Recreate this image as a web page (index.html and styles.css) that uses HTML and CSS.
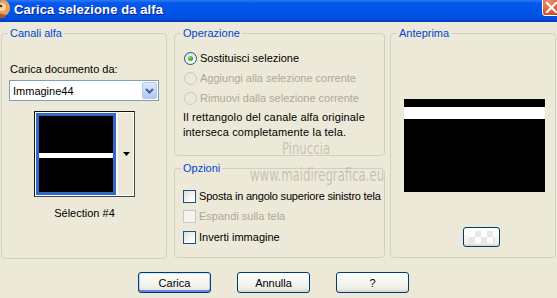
FILE: index.html
```html
<!DOCTYPE html>
<html>
<head>
<meta charset="utf-8">
<link rel="stylesheet" href="styles.css">
</head>
<body>
<div class="window">
  <div class="titlebar">
    <svg class="app-icon" width="14" height="20" viewBox="0 0 14 20">
      <ellipse cx="5" cy="9" rx="7" ry="8" fill="#E9A25A"/>
      <ellipse cx="4" cy="8" rx="4" ry="4" fill="#F6D7A8"/>
      <circle cx="3" cy="7" r="1.3" fill="#5A2C10"/>
      <path d="M0 14 L8 16 L6 19 L0 19 Z" fill="#B5552A"/>
    </svg>
    <span class="title">Carica selezione da alfa</span>
    <div class="close">
      <svg width="13" height="13" viewBox="0 0 13 13"><path d="M2 2 L11 11 M11 2 L2 11" stroke="#fff" stroke-width="2.2" stroke-linecap="square"/></svg>
    </div>
  </div>

  <div class="main">
    <fieldset class="box canali">
      <legend>Canali alfa</legend>
      <div class="lbl">Carica documento da:</div>
      <div class="combo">
        <span class="combo-text">Immagine44</span>
        <span class="combo-btn">
          <svg width="9" height="6" viewBox="0 0 9 6"><path d="M1 1 L4.5 4.5 L8 1" fill="none" stroke="#4D6185" stroke-width="2"/></svg>
        </span>
      </div>
      <div class="thumb-wrap">
        <div class="thumb">
          <div class="thumb-img"><div class="thumb-stripe"></div></div>
          <div class="thumb-drop">
            <svg width="7" height="4" viewBox="0 0 7 4"><path d="M0 0 H7 L3.5 4 Z" fill="#000"/></svg>
          </div>
        </div>
        <div class="thumb-name">Sélection #4</div>
      </div>
    </fieldset>

    <div class="col2">
      <fieldset class="box oper">
        <legend>Operazione</legend>
        <div class="opt"><span class="radio checked"></span><span>Sostituisci selezione</span></div>
        <div class="opt disabled"><span class="radio"></span><span>Aggiungi alla selezione corrente</span></div>
        <div class="opt disabled"><span class="radio"></span><span>Rimuovi dalla selezione corrente</span></div>
        <p class="note">Il rettangolo del canale alfa originale<br>interseca completamente la tela.</p>
      </fieldset>
      <fieldset class="box opz">
        <legend>Opzioni</legend>
        <div class="chk-row"><span class="check"></span><span class="tight">Sposta in angolo superiore sinistro tela</span></div>
        <div class="chk-row disabled"><span class="check"></span><span>Espandi sulla tela</span></div>
        <div class="chk-row last"><span class="check"></span><span>Inverti immagine</span></div>
      </fieldset>
    </div>

    <fieldset class="box antep">
      <legend>Anteprima</legend>
      <div class="preview"><div class="preview-stripe"></div></div>
      <div class="bg-btn"><div class="checker"></div></div>
    </fieldset>
  </div>

  <div class="buttons">
    <button class="btn default">Carica</button>
    <button class="btn">Annulla</button>
    <button class="btn">?</button>
  </div>

  <div class="watermark">
    <div class="wm1">Pinuccia</div>
    <div class="wm2">www.maidiregrafica.eu</div>
  </div>
</div>
</body>
</html>
```

FILE: styles.css
```css
html, body {
  margin: 0;
  padding: 0;
  background: #ECE9D8;
}
body {
  font-family: "Liberation Sans", Arial, sans-serif;
  font-size: 11px;
  color: #000;
}
.window {
  position: relative;
  width: 557px;
  height: 298px;
  overflow: hidden;
  background: #ECE9D8;
}

/* Title bar */
.titlebar {
  height: 22px;
  display: flex;
  align-items: center;
  background: linear-gradient(to bottom, #2A7BF5 0px, #0758EC 3px, #0055E8 10px, #0152E2 17px, #0046D6 20px, #0038B8 22px);
  position: relative;
}
.app-icon {
  flex: none;
  margin-left: -2px;
  margin-top: -4px;
}
.title {
  margin-left: 2px;
  margin-top: -4px;
  color: #fff;
  font-weight: bold;
  font-size: 13px;
  text-shadow: 1px 1px 0 #0A1E8C;
  letter-spacing: 0.1px;
}
.close {
  position: absolute;
  left: 542px;
  top: -5px;
  width: 21px;
  height: 21px;
  box-sizing: border-box;
  border: 1px solid #fff;
  border-radius: 3px;
  background: radial-gradient(circle at 30% 30%, #F0906E, #DC5631 60%, #C23B17);
  display: flex;
  align-items: center;
  justify-content: center;
}
.close svg { margin-top: 3px; margin-left: -2px; }

/* Main grid */
.main {
  display: grid;
  grid-template-columns: 166px 218px 171px;
  padding: 5px 0 0 1px;
  align-items: start;
}
.box {
  margin: 0;
  padding: 0 6px;
  border: 1px solid #D0D0BF;
  border-radius: 4px;
  box-sizing: border-box;
  min-width: 0;
}
.box legend {
  padding: 0 2px;
  color: #0046D5;
  font-size: 11px;
  line-height: 13px;
}
.canali { height: 232px; }
.col2 {
  margin-left: 7px;
  display: flex;
  flex-direction: column;
  gap: 6px;
}
.oper { height: 129px; }
.opz { height: 96px; }
.antep { height: 231px; margin-left: 5px; }

/* Canali alfa */
.lbl {
  margin-top: 23px;
  line-height: 13px;
  margin-left: 2px;
}
.combo {
  margin-top: 4px;
  margin-left: 1px;
  width: 150px;
  height: 21px;
  box-sizing: border-box;
  border: 1px solid #7F9DB9;
  background: #fff;
  display: flex;
  align-items: center;
  justify-content: space-between;
}
.combo-text { margin-left: 3px; }
.combo-btn {
  width: 15px;
  height: 17px;
  margin-right: 1px;
  box-sizing: border-box;
  border: 1px solid #BAC9EF;
  border-radius: 2px;
  background: linear-gradient(to bottom, #DCE6FC, #C3D4FB 60%, #B1C6F6);
  display: flex;
  align-items: center;
  justify-content: center;
}
.thumb-wrap {
  margin-left: 26px;
  margin-top: 10px;
  width: 101px;
  display: flex;
  flex-direction: column;
  align-items: center;
}
.thumb {
  width: 101px;
  height: 86px;
  box-sizing: border-box;
  border: 1px solid #111;
  border-right-color: #444;
  border-bottom-color: #444;
  padding: 1px;
  background: #fff;
  display: flex;
}
.thumb-img {
  width: 80px;
  height: 82px;
  box-sizing: border-box;
  border: 3px solid #316AC5;
  background: #000;
  padding-top: 37px;
}
.thumb-stripe {
  height: 5px;
  background: #fff;
}
.thumb-drop {
  flex: 1;
  margin-left: 1px;
  background: #ECE9D8;
  border-left: 1px solid #fff;
  display: flex;
  align-items: center;
  justify-content: center;
}
.thumb-drop svg { margin-left: 1px; }
.thumb-name {
  margin-top: 10px;
  line-height: 13px;
}

/* Operazione */
.opt {
  display: flex;
  align-items: center;
  height: 20px;
  margin-left: 3px;
  white-space: nowrap;
}
.oper legend + .opt { margin-top: 8px; }
.opt .radio { margin-right: 3px; }
.radio {
  flex: none;
  width: 13px;
  height: 13px;
  box-sizing: border-box;
  border-radius: 50%;
  border: 1px solid #1C5180;
  background: linear-gradient(135deg, #DCDCD7, #FFFFFF 80%);
  display: flex;
  align-items: center;
  justify-content: center;
}
.radio.checked::after {
  content: "";
  width: 5px;
  height: 5px;
  border-radius: 50%;
  background: radial-gradient(circle at 35% 35%, #7FE27F, #21A121 70%);
}
.disabled { color: #ACA899; }
.disabled .radio {
  border-color: #CAC8BB;
  background: transparent;
}
.note {
  margin: 2px 0 0 2px;
  line-height: 15px;
  white-space: nowrap;
  letter-spacing: 0.15px;
}

/* Opzioni */
.chk-row {
  display: flex;
  align-items: center;
  height: 20px;
  margin-left: 2px;
  white-space: nowrap;
}
.tight { letter-spacing: -0.2px; }
.opz legend + .chk-row { margin-top: 11px; }
.chk-row.last { margin-top: 1px; }
.check {
  flex: none;
  width: 13px;
  height: 13px;
  box-sizing: border-box;
  border: 1px solid #1C5180;
  background: linear-gradient(135deg, #DCDCD7, #FFFFFF 80%);
  margin-right: 3px;
}
.chk-row.disabled .check {
  border-color: #CAC8BB;
  background: #F5F4EE;
}

/* Anteprima */
.preview {
  margin: 59px 0 0 7px;
  width: 141px;
  height: 93px;
  background: #000;
  padding-top: 8px;
  box-sizing: border-box;
}
.preview-stripe {
  height: 12px;
  background: #fff;
}
.bg-btn {
  margin: 35px 0 0 66px;
  width: 37px;
  height: 20px;
  box-sizing: border-box;
  border: 1px solid #003C74;
  border-radius: 3px;
  background: linear-gradient(to bottom, #FFFFFF, #F0F0EA 85%, #D8D2C6);
  display: flex;
  align-items: center;
  justify-content: center;
}
.checker {
  width: 26px;
  height: 12px;
  background-color: #fff;
  background-image:
    linear-gradient(45deg, #E6E6E6 25%, transparent 25%, transparent 75%, #E6E6E6 75%),
    linear-gradient(45deg, #E6E6E6 25%, transparent 25%, transparent 75%, #E6E6E6 75%);
  background-size: 12px 12px;
  background-position: 0 0, 6px 6px;
  opacity: 0.9;
}

/* Buttons */
.buttons {
  display: flex;
  gap: 26px;
  padding-left: 138px;
  margin-top: 13px;
}
.btn {
  width: 73px;
  height: 21px;
  padding: 0;
  font-family: "Liberation Sans", Arial, sans-serif;
  font-size: 11px;
  color: #000;
  border: 1px solid #003C74;
  border-radius: 3px;
  background: linear-gradient(to bottom, #FFFFFF 0%, #F6F5F1 50%, #ECEBE4 85%, #D6D0C5 100%);
}
.btn.default {
  box-shadow: inset 0 1px 0 #CEE7FF, inset 0 -2px 0 #6982EE, inset 1px 0 0 #B8D4FA, inset -1px 0 0 #B8D4FA;
}

/* Watermark */
.watermark {
  position: absolute;
  left: 250px;
  top: 141px;
  width: 108px;
  color: rgba(110, 104, 90, 0.32);
  font-family: "Liberation Sans Narrow", "DejaVu Sans Condensed", sans-serif;
  pointer-events: none;
  text-align: center;
}
.wm1 {
  font-size: 13px;
  line-height: 16px;
  transform: scaleY(1.2);
  padding-left: 4px;
}
.wm2 {
  font-size: 13px;
  line-height: 14px;
  margin-top: 12px;
  letter-spacing: 0;
  transform: scaleY(1.3);
}
```
